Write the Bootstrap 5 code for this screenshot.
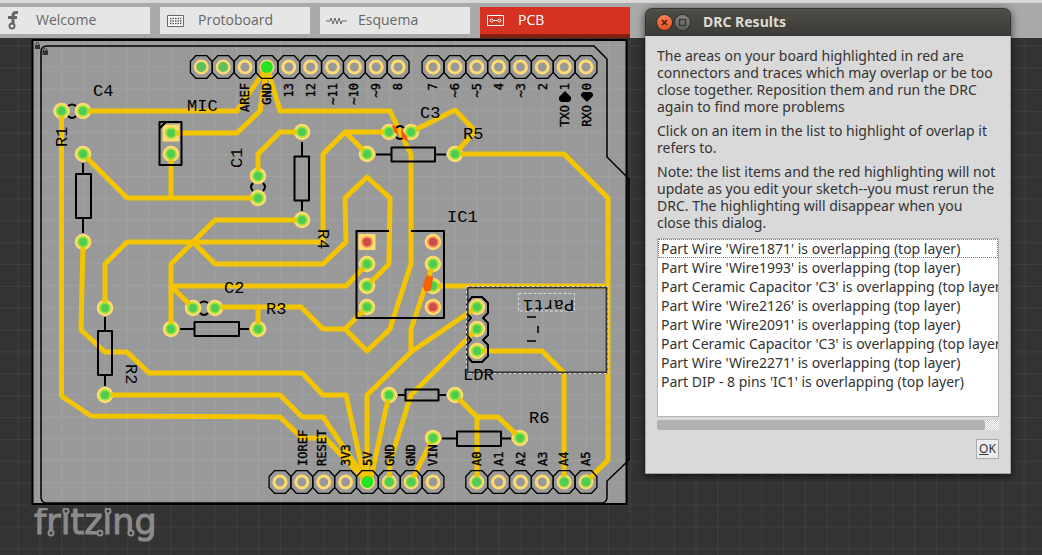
<!DOCTYPE html>
<html lang="en">
<head>
<meta charset="utf-8">
<meta name="viewport" content="width=device-width, initial-scale=1">
<title>Fritzing – PCB</title>
<link rel="stylesheet" href="https://cdn.jsdelivr.net/npm/bootstrap@5.3.0/dist/css/bootstrap.min.css">
<style>
  body { font-family: "Noto Sans", "Open Sans", sans-serif; font-size: 14px; background: #333; }
  .top-edge { height: 3px; background: #d9d9d9; }
  .view-bar { background: #a9a9a9; height: 35px; padding-top: 4px; gap: 10px; }
  .view-tab { width: 150px; height: 27px; background: #e6e6e6; color: #666; border: 0; padding: 0 0 2px 6px; line-height: 24px; font-family: "Open Sans", sans-serif; }
  .view-tab svg { width: 22px; height: 20px; margin-right: 10px; flex: none; }
  .view-tab.home { padding-left: 4px; }
  .view-tab.current { background: #d63222; color: #fff; height: 31px; border-bottom: 4px solid #84200c; padding-bottom: 2px; }
  .workspace { background: #333; }
  .board { width: 602px; height: 470px; margin-left: 30px; }
  .logo { width: 142px; height: 44px; margin-left: 30px; }

  .trace { fill: none; stroke: #f2c500; stroke-width: 5; stroke-linejoin: round; stroke-linecap: round; }
  .silk { fill: none; stroke: #000; stroke-width: 2; stroke-linejoin: round; }
  .pts { fill: none; stroke: none; }
  .rings { marker: url(#ring); }
  .cores { marker: url(#core); }
  .reds { marker: url(#redcore); }
  .open { marker: url(#open); }
  .octs { marker: url(#oct); }
  .names { font: 17px "Liberation Mono", monospace; }
  .pins { font: 12px "DejaVu Sans Mono", monospace; stroke: #000; }

  .drc { top: 8px; right: 31px; width: 366px; border-radius: 7px 7px 0 0; background: #d9d9d9; border: 1px solid #a5a59f; box-shadow: 0 2px 8px #000a; color: #333; }
  .drc-title { height: 28px; margin: -1px -1px 0; padding-left: 11px; gap: 3px; border-radius: 7px 7px 0 0; background: linear-gradient(#5a5852 0, #4c4b45 2px, #3c3b37 100%); border: 1px solid #33322e; }
  .drc-title h1 { font: bold 14px/20px "Noto Sans", sans-serif; color: #dfdbd2; margin: 0 0 0 10px; }
  .win-btn { width: 15px; height: 15px; border: 0; padding: 0; border-radius: 50%; background: linear-gradient(#85837c, #5f5e58); box-shadow: 0 0 0 1px #302f2b; display: flex; }
  .win-btn.close-win { background: linear-gradient(#f78056, #e5501f); }
  .drc-body { padding: 11px 11px 14px; }
  .drc-body p { line-height: 17px; margin: 0 0 7px; white-space: nowrap; }
  .results { height: 179px; background: #fff; border: 1px solid #b8b5b0; overflow: hidden; border-radius: 0; }
  .results button { border: 1px solid transparent; padding: 0 0 0 2px; height: 19px; line-height: 17px; background: none; color: #333; text-align: left; white-space: nowrap; }
  .results button.picked { border: 1px dotted #777; }
  .hbar { height: 10px; margin-top: 3px; background: repeating-conic-gradient(#fff 0 25%, #d0d0d0 0 50%) 0 0 / 2px 2px; }
  .hbar div { width: 96%; background: #b1b1b1; border-radius: 2px; }
  .ok-btn { width: 23px; height: 20px; margin-top: 9px; border: 1px solid #aaa; background: #ececec; color: #333; padding: 0; font-size: 12px; line-height: 18px; }
</style>
</head>
<body class="vh-100 d-flex flex-column overflow-hidden position-relative">
<div class="top-edge"></div>
<nav class="view-bar d-flex align-items-start" aria-label="Views">
  <button class="view-tab home d-flex align-items-center"><svg viewBox="0 0 22 20" fill="none" stroke="#666" stroke-width="2"><path d="M14 2.500h-2q-3 0-3 3v8M4 7.500h9" stroke-width="3"/><circle cx="8" cy="16" r="2.500"/></svg>Welcome</button>
  <button class="view-tab d-flex align-items-center"><svg viewBox="0 0 22 20"><path d="M1.500 5.500h16v11h-16z" fill="#fff" stroke="#666"/><path d="M4 8.500h12M4 11h12M4 13.500h12" stroke="#555" stroke-width="1.500" stroke-dasharray="1.500 1"/></svg>Protoboard</button>
  <button class="view-tab d-flex align-items-center"><svg viewBox="0 0 22 20" fill="none" stroke="#666"><path d="M-1 11h5l1-3 2 6 2-6 2 6 2-6 2 6 1-3h5"/></svg>Esquema</button>
  <button class="view-tab current d-flex align-items-center" aria-current="page"><svg viewBox="0 0 22 20" fill="none" stroke="#fff"><path d="M1.500 5.500h16v10h-16z"/><circle cx="5.500" cy="10.500" r="1.500"/><circle cx="13.500" cy="10.500" r="1.500"/><path d="M7 10.500h5"/></svg>PCB</button>
</nav>

<main class="workspace flex-grow-1 position-relative d-flex flex-column align-items-start">
  <svg class="position-absolute w-100 h-100" aria-hidden="true">
    <defs><pattern id="grid" x="17.500" y="7.300" width="21.870" height="21.870" patternUnits="userSpaceOnUse"><path d="M0.500 0V22M0 .500H22" stroke="#3d4043" fill="none"/></pattern></defs>
    <rect width="100%" height="100%" fill="url(#grid)"/>
  </svg>

  <svg class="board position-relative" viewBox="30 38 602 470" role="img" aria-label="Circuit board">
    <defs>
      <pattern id="bgrid" x="83" y="66.500" width="21.870" height="21.870" patternUnits="userSpaceOnUse"><path d="M.500 0V22M0 .500H22" stroke="#9fa1a3" fill="none"/></pattern>
      <marker id="ring" markerUnits="userSpaceOnUse" markerWidth="30" markerHeight="30" overflow="visible"><circle r="8.300" fill="#ffdb6e"/></marker>
      <marker id="core" markerUnits="userSpaceOnUse" markerWidth="30" markerHeight="30" overflow="visible"><circle r="5.800" fill="#8fe53b"/><circle r="3.900" fill="#4fcb52"/></marker>
      <marker id="redcore" markerUnits="userSpaceOnUse" markerWidth="30" markerHeight="30" overflow="visible"><circle r="5.800" fill="#f58a55"/><circle r="4" fill="#cd4b4b"/></marker>
      <marker id="open" markerUnits="userSpaceOnUse" markerWidth="30" markerHeight="30" overflow="visible"><circle r="6" fill="#999" stroke="#ffdb6e" stroke-width="3"/></marker>
      <marker id="oct" markerUnits="userSpaceOnUse" markerWidth="40" markerHeight="40" overflow="visible"><path d="M-5.500-11.300H5.500L10.900-5.500V5.500L5.500 11.300H-5.500L-10.900 5.500V-5.500Z" fill="none" stroke="#000" stroke-width="1.300"/></marker>
    </defs>

    <!-- board body -->
    <path d="M32.500 40H626.500V504H32.500Z" fill="#999"/>
    <path d="M32.500 40H626.500V504H32.500Z" fill="url(#bgrid)" stroke="#000" stroke-width="2"/>
    <path d="M47 46H594L607 59V157L629 179V460L607 481V497Q607 503 601 503H47Q41 503 41 497V52Q41 46 47 46Z" fill="none" stroke="#000" stroke-width="1.500"/>
    <g fill="#333"><path d="M35 45h5v4h-5zM42.500 50.500h5.500v4.500h-5.500z"/><path d="M36 45v-1.500q1.500-2.500 3 0V45M43.700 51v-2q1.500-2 3 0v2" fill="none" stroke="#333"/></g>

    <!-- copper rings -->
    <path class="pts rings" d="M61.500 111L83 111L171 154L83 154L83 242L105 308L105 395L193 308L215 308L171 329L258 329L258 176L258 198L302 132L302 220L389 132L411 132L367 154L455 154L367 264L367 286L367 307L433 242L433 264L433 286L433 307L477 307L477 329L477 351L389 395L455 395L433 438L520 438"/>
    <path d="M162.500 124.500h17v17h-17zM358.500 234h17v16h-17z" fill="#ffdb6e"/>
    <path class="pts open" d="M201.300 67L223.200 67L245 67L266.900 67L288.800 67L310.600 67L332.500 67L354.400 67L376.200 67L398.100 67L433 67L454.900 67L476.700 67L498.600 67L520.500 67L542.300 67L564.200 67L586 67L280 482L301.800 482L323.700 482L345.600 482L367.400 482L389.300 482L411.200 482L433 482L476.700 482L498.600 482L520.500 482L542.300 482L564.200 482L586 482"/>

    <!-- traces -->
    <g class="trace">
      <path d="M83 111H237L267 67L260 111L237 133H171M267 67L280 111H390L402 136L411 154V264L394 316L390 329L367 351L345 329H323L301 307H215M345 329L367 307"/>
      <path d="M61.500 111V396L91 416L280 417L302 438H325L367 482"/>
      <path d="M83 154L127 198H258M171 154V198M83 242L81 330L105 352H127L149 373H302L323 395H346L365 482"/>
      <path d="M105 308V264L127 242H323V154L345 132H389M345 132L367 154M105 395H280L302 417H323L367 482"/>
      <path d="M171 329V264L215 220H302M193 242L215 264H323L346 242L345 198L367 177L390 198L389 264L367 286M171 286L193 308M171 286H346L367 264M258 307V329"/>
      <path d="M258 176V154L280 132H302M411 132L455 110L475 131L455 154H564L608 198V460L586 482M433 286H608"/>
      <path d="M433 264L411 329V352M477 307L411 352L367 395V482M477 329L411 395L390 462L389 482M477 351H542L564 373V482M389 395L370 482"/>
      <path d="M455 395L477 417H498L520 438M477 417V482M433 438L411 482"/>
    </g>

    <!-- silkscreen outlines -->
    <path class="pts octs" d="M201.300 67L223.200 67L245 67L266.900 67L288.800 67L310.600 67L332.500 67L354.400 67L376.200 67L398.100 67L433 67L454.900 67L476.700 67L498.600 67L520.500 67L542.300 67L564.200 67L586 67L280 482L301.800 482L323.700 482L345.600 482L367.400 482L389.300 482L411.200 482L433 482L476.700 482L498.600 482L520.500 482L542.300 482L564.200 482L586 482"/>
    <g class="silk">
      <path d="M159.500 122h22v43h-22zM160 128l6-6"/>
      <path d="M76 174h15v44H76zM83 163v11M83 218v15"/>
      <path d="M98 331h14v44H98zM105 317v14M105 375v11"/>
      <path d="M194.500 322h44.500v14H194.500zM180 329h14M239 329h10"/>
      <path d="M294.500 156.500h14.500v44h-14.500zM302 142v14M302 201v10"/>
      <path d="M391.500 147.500h43.500v14h-43.500zM376 154.500h15M435 154.500h11"/>
      <path d="M405.500 389.500h33v11h-33zM398 395h7M439 395h7"/>
      <path d="M457 431.500h44v14.500h-44zM442 438.500h15M501 438.500h10"/>
      <path d="M389 231H356.500V318H444V231H411"/>
      <path d="M68 106q4-3 8 0M68 116q4 4 8 0M200 303q4-3 8 0M200 313q4 4 8 0M253 183q-4 4 0 8M263 183q4 4 0 8M396 128q4-4 8 0M396 137q4 4 8 0"/>
      <path d="M472 297H482L488 303V313L483 318L488 323V335L483 340L488 345V356L482 362H472L467 356V345L471 340L467 335V323L471 318L467 313V303Z"/>
      <path d="M527 317h9M538 326v7M527 341h9" stroke-width="1.500"/>
    </g>

    <!-- pad centres -->
    <path class="pts cores" d="M61.500 111L83 111L171 133L171 154L83 154L83 242L105 308L105 395L193 308L215 308L171 329L258 329L258 176L258 198L302 132L302 220L389 132L411 132L367 154L455 154L367 264L367 286L367 307L433 264L433 286L477 307L477 329L477 351L389 395L455 395L433 438L520 438"/>
    <path class="pts reds" d="M367 242L433 242L433 307"/>
    <g fill="#5fc05f"><circle cx="201.300" cy="67" r="5"/><circle cx="223.200" cy="67" r="5"/></g>
    <g fill="#54cb54" stroke="#9be04c"><circle cx="389.300" cy="482" r="5"/><circle cx="411.200" cy="482" r="5"/><circle cx="476.700" cy="482" r="5"/><circle cx="564.200" cy="482" r="5"/><circle cx="586" cy="482" r="5"/></g>
    <g fill="#25e325"><circle cx="266.900" cy="67" r="6"/><circle cx="367.400" cy="482" r="6"/></g>

    <!-- overlap highlighting -->
    <path d="M392 125l5 3 1 7-4-3zM401 130l6 6 1 6-6-4z" fill="#fb5a14"/>
    <path d="M429 276l4 1-1 5-2 9-5 0-2-5 3-9z" fill="#ff6200" stroke="#f04e1a" stroke-dasharray="1 1"/>
    <path d="M427 274v6M424 285l2 6M394 125l4 10M402 129l3 10" stroke="#e8541c"/>

    <!-- selected part -->
    <path d="M467.500 287.500H606.500V372.500H467.500Z" fill="none" stroke="#333" stroke-width="2"/>
    <path d="M466.500 286.500H608V373.500H466.500ZM518.500 293.500H574.500V311H518.500Z" fill="none" stroke="#ddd" stroke-dasharray="3 2"/>

    <g class="names">
      <text x="93" y="96">C4</text><text x="187" y="111">MIC</text><text x="420" y="118">C3</text><text x="463" y="139">R5</text>
      <text x="447" y="222">IC1</text><text x="224" y="293">C2</text><text x="266" y="314">R3</text><text x="463" y="380">LDR</text><text x="529" y="423">R6</text>
      <text transform="translate(67 147) rotate(-90)">R1</text><text transform="translate(242 168) rotate(-90)">C1</text>
      <text transform="translate(318 229) rotate(90)">R4</text><text transform="translate(126 364) rotate(90)">R2</text>
      <text transform="translate(574 300) rotate(180)">Part1</text>
    </g>
    <g class="pins" text-anchor="end" stroke-width=".4">
      <text transform="translate(249 83) rotate(-90)">AREF</text><text transform="translate(271 83) rotate(-90)">GND</text>
      <text transform="translate(293 83) rotate(-90)">13</text><text transform="translate(315 83) rotate(-90)">12</text>
      <text transform="translate(337 83) rotate(-90)">~11</text><text transform="translate(358 83) rotate(-90)">~10</text>
      <text transform="translate(380 83) rotate(-90)">~9</text><text transform="translate(402 83) rotate(-90)">8</text>
      <text transform="translate(437 83) rotate(-90)">7</text><text transform="translate(459 83) rotate(-90)">~6</text>
      <text transform="translate(481 83) rotate(-90)">~5</text><text transform="translate(503 83) rotate(-90)">4</text>
      <text transform="translate(525 83) rotate(-90)">~3</text><text transform="translate(547 83) rotate(-90)">2</text>
      <text transform="translate(569 83) rotate(-90)">1</text><text transform="translate(591 83) rotate(-90)">0</text>
      <text transform="translate(569 105) rotate(-90)">TXO</text><text transform="translate(591 105) rotate(-90)">RXO</text>
    </g>
    <path d="M565 91l6 6v3l-2 2h-8l-2-2v-3zM587 102l-6-6v-2l2-2h8l2 2v2z"/>
    <g class="pins" stroke-width=".4">
      <text transform="translate(307 466) rotate(-90)">IOREF</text><text transform="translate(326 466) rotate(-90)">RESET</text>
      <text transform="translate(350 466) rotate(-90)">3V3</text><text transform="translate(372 466) rotate(-90)">5V</text>
      <text transform="translate(394 466) rotate(-90)">GND</text><text transform="translate(415 466) rotate(-90)">GND</text>
      <text transform="translate(437 466) rotate(-90)">VIN</text><text transform="translate(481 466) rotate(-90)">A0</text>
      <text transform="translate(503 466) rotate(-90)">A1</text><text transform="translate(525 466) rotate(-90)">A2</text>
      <text transform="translate(547 466) rotate(-90)">A3</text><text transform="translate(568 466) rotate(-90)">A4</text>
      <text transform="translate(590 466) rotate(-90)">A5</text>
    </g>
  </svg>

  <svg class="logo position-relative" viewBox="0 0 142 44" role="img" aria-label="fritzing">
    <text x="4" y="26" fill="#8b8b8b" stroke="#8b8b8b" font-family="DejaVu Sans, sans-serif" font-size="35">fritzing</text>
    <g fill="#333" stroke="#8b8b8b" stroke-width="2"><circle cx="36" cy="3" r="2.500"/><circle cx="78" cy="3" r="2.500"/><circle cx="21" cy="25" r="2.500"/><circle cx="70" cy="25" r="2.500"/><circle cx="101" cy="25" r="2.500"/></g>
  </svg>
</main>

<section class="drc position-absolute" role="dialog" aria-labelledby="drcTitle">
  <header class="drc-title d-flex align-items-center">
    <button class="win-btn close-win" aria-label="Close"><svg viewBox="0 0 15 15"><path d="M5 5l5 5M10 5l-5 5" stroke="#4a2010" stroke-width="1.500"/></svg></button>
    <button class="win-btn" aria-label="Maximize"><svg viewBox="0 0 15 15"><path d="M4.500 4.500h6v6h-6z" fill="none" stroke="#3c3b37" stroke-width="1.500"/></svg></button>
    <h1 id="drcTitle">DRC Results</h1>
  </header>
  <div class="drc-body d-flex flex-column">
    <p>The areas on your board highlighted in red are<br>connectors and traces which may overlap or be too<br>close together. Reposition them and run the DRC<br>again to find more problems</p>
    <p>Click on an item in the list to highlight of overlap it<br>refers to.</p>
    <p>Note: the list items and the red highlighting will not<br>update as you edit your sketch--you must rerun the<br>DRC. The highlighting will disappear when you<br>close this dialog.</p>
    <div class="results d-flex flex-column">
      <button class="picked">Part Wire 'Wire1871' is overlapping (top layer)</button>
      <button>Part Wire 'Wire1993' is overlapping (top layer)</button>
      <button>Part Ceramic Capacitor 'C3' is overlapping (top layer)</button>
      <button>Part Wire 'Wire2126' is overlapping (top layer)</button>
      <button>Part Wire 'Wire2091' is overlapping (top layer)</button>
      <button>Part Ceramic Capacitor 'C3' is overlapping (top layer)</button>
      <button>Part Wire 'Wire2271' is overlapping (top layer)</button>
      <button>Part DIP - 8 pins 'IC1' is overlapping (top layer)</button>
    </div>
    <div class="hbar d-flex"><div></div></div>
    <button class="ok-btn align-self-end"><u>O</u>K</button>
  </div>
</section>
<script src="https://cdn.jsdelivr.net/npm/bootstrap@5.3.0/dist/js/bootstrap.bundle.min.js"></script>
</body>
</html>
